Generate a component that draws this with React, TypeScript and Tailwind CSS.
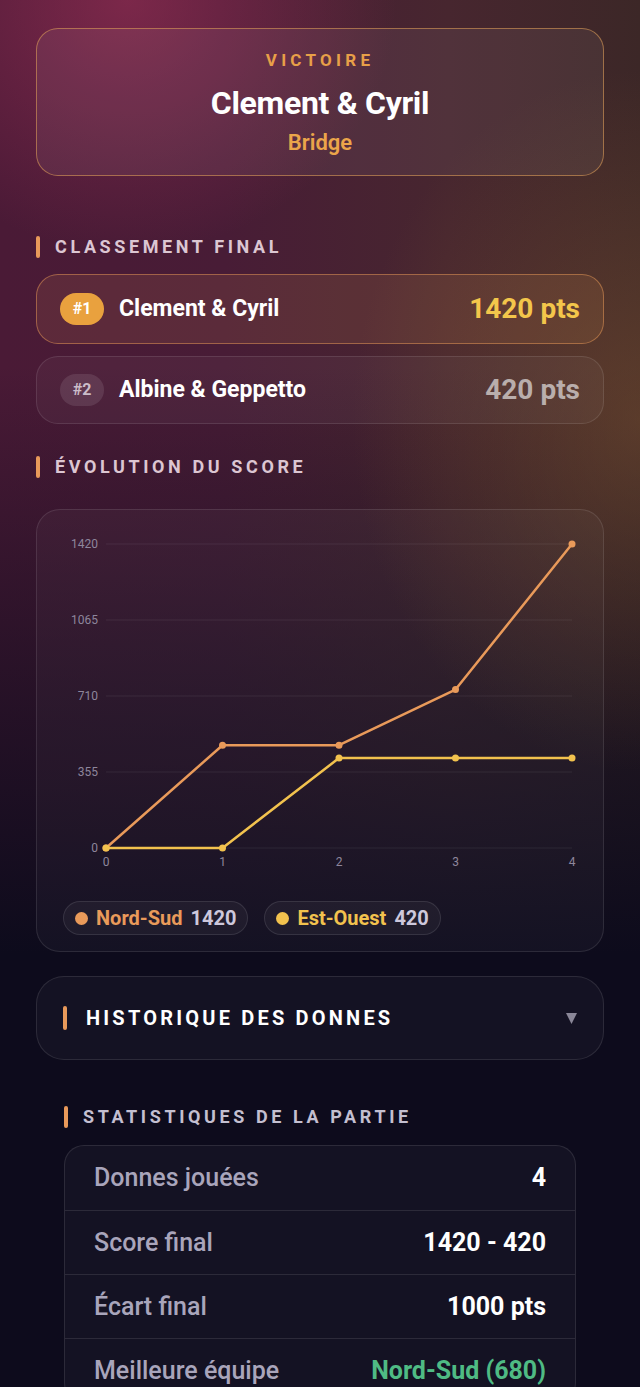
const nordSud = [0, 480, 480, 740, 1420];
const estOuest = [0, 0, 420, 420, 420];
const maxScore = 1420;

const ticks = [1420, 1065, 710, 355, 0];

const stats = [
  { label: "Donnes jouées", value: "4" },
  { label: "Score final", value: "1420 - 420" },
  { label: "Écart final", value: "1000 pts" },
  { label: "Meilleure équipe", value: "Nord-Sud (680)", accent: true },
];

const px = (i: number) => 69 + i * 116.5;
const py = (v: number) => 338 - (v / maxScore) * 304;

const SectionTitle = ({ children, className = "" }: { children: React.ReactNode; className?: string }) => (
  <div className={`flex h-[22px] items-center gap-[15px] ${className}`}>
    <span className="h-[22px] w-[4px] rounded-full bg-[#e8995a]" />
    <h2 className="text-[18px] font-bold uppercase leading-none tracking-[0.2em] text-[#dcc6d2]">{children}</h2>
  </div>
);

const ScoreChart = () => {
  const line = (data: number[]) => data.map((v, i) => `${px(i)},${py(v)}`).join(" ");

  return (
    <svg width="568" height="372" viewBox="0 0 568 372" className="block">
      {ticks.map((t) => (
        <g key={t}>
          <line x1="69" x2="535" y1={py(t)} y2={py(t)} stroke="rgba(255,255,255,0.07)" strokeWidth="1" />
          <text x="61" y={py(t) + 4} textAnchor="end" fontSize="12" fill="#8e869c" fontFamily="Roboto, sans-serif">
            {t}
          </text>
        </g>
      ))}
      {[0, 1, 2, 3, 4].map((i) => (
        <text key={i} x={px(i)} y="356" textAnchor="middle" fontSize="12" fill="#8e869c" fontFamily="Roboto, sans-serif">
          {i}
        </text>
      ))}

      <polyline points={line(nordSud)} fill="none" stroke="#e99a5a" strokeWidth="2.5" strokeLinejoin="round" />
      {nordSud.map((v, i) => (
        <circle key={`ns${i}`} cx={px(i)} cy={py(v)} r="3.5" fill="#e99a5a" />
      ))}

      <polyline points={line(estOuest)} fill="none" stroke="#f2c24e" strokeWidth="2.5" strokeLinejoin="round" />
      {estOuest.map((v, i) => (
        <circle key={`eo${i}`} cx={px(i)} cy={py(v)} r="3.5" fill="#f2c24e" />
      ))}
    </svg>
  );
};

const LegendPill = ({ color, text, label, value }: { color: string; text: string; label: string; value: number }) => (
  <div className="flex h-[34px] items-center gap-[8px] rounded-full border border-white/10 bg-white/[0.04] px-[11px]">
    <span className={`h-[13px] w-[13px] rounded-full ${color}`} />
    <span className={`text-[20px] font-bold ${text}`}>{label}</span>
    <span className="text-[20px] font-bold text-[#cdc8dc]">{value}</span>
  </div>
);

export default function App() {
  return (
    <div className="min-h-[1387px] w-full overflow-hidden bg-[#0d0b1c] bg-[radial-gradient(ellipse_42%_18%_at_20%_0%,rgba(165,50,90,0.55),transparent),radial-gradient(ellipse_45%_25%_at_100%_30%,rgba(125,82,48,0.5),transparent),linear-gradient(180deg,transparent_26%,rgba(13,11,28,0.5)_46%,#0d0b1c_68%),linear-gradient(90deg,#4a1a36_0%,#481c36_35%,#47262f_70%,#3c2727_100%)] font-['Roboto',sans-serif]">
      <div className="px-[36px] pt-[28px]">
        {/* victory banner */}
        <div className="flex h-[148px] flex-col items-center rounded-[22px] border border-[#d99a55]/60 bg-white/[0.06] pt-[23px]">
          <p className="text-[17px] font-bold leading-none tracking-[0.25em] text-[#e8a048]">VICTOIRE</p>
          <h1 className="mt-[18px] text-[32px] font-bold leading-none tracking-[-0.01em] text-white">Clement &amp; Cyril</h1>
          <p className="mt-[13px] text-[22px] font-semibold leading-none text-[#eba54a]">Bridge</p>
        </div>

        <SectionTitle className="mt-[60px]">Classement final</SectionTitle>

        <div className="mt-[16px] flex flex-col gap-[12px]">
          <div className="flex h-[70px] items-center rounded-[22px] border border-[#e89a58]/50 bg-[#e89a58]/[0.12] px-[23px]">
            <span className="flex h-[32px] w-[44px] items-center justify-center rounded-full bg-[#e9a13e] text-[16px] font-bold text-white">#1</span>
            <span className="ml-[15px] text-[23px] font-bold text-white">Clement &amp; Cyril</span>
            <span className="ml-auto text-[28px] font-bold text-[#f3c64b]">1420 pts</span>
          </div>
          <div className="flex h-[68px] items-center rounded-[22px] border border-white/10 bg-white/[0.04] px-[23px]">
            <span className="flex h-[32px] w-[44px] items-center justify-center rounded-full bg-white/10 text-[16px] font-bold text-[#cbbcc8]">#2</span>
            <span className="ml-[15px] text-[23px] font-bold text-white">Albine &amp; Geppetto</span>
            <span className="ml-auto text-[28px] font-bold text-[#b9aeac]">420 pts</span>
          </div>
        </div>

        <SectionTitle className="mt-[32px]">Évolution du score</SectionTitle>

        {/* score chart */}
        <div className="mt-[31px] h-[443px] rounded-[24px] border border-white/10 bg-white/[0.03]">
          <ScoreChart />
          <div className="mt-[19px] flex gap-[16px] px-[26px]">
            <LegendPill color="bg-[#e99a5a]" text="text-[#e99a5a]" label="Nord-Sud" value={1420} />
            <LegendPill color="bg-[#f2c24e]" text="text-[#f2c24e]" label="Est-Ouest" value={420} />
          </div>
        </div>

        {/* history accordion */}
        <button className="mt-[24px] flex h-[84px] w-full items-center rounded-[28px] border border-white/10 bg-white/[0.03] pl-[26px] pr-[26px] text-left">
          <span className="h-[24px] w-[4px] rounded-full bg-[#e8995a]" />
          <span className="ml-[19px] text-[20px] font-bold leading-none tracking-[0.16em] text-white">HISTORIQUE DES DONNES</span>
          <svg className="ml-auto" width="11" height="11" viewBox="0 0 11 11">
            <polygon points="0,0 11,0 5.5,11" fill="#8a8798" />
          </svg>
        </button>

        {/* stats */}
        <div className="px-[28px]">
          <SectionTitle className="mt-[46px] [&_h2]:text-[#c3bfd0]">Statistiques de la partie</SectionTitle>
          <div className="mt-[17px] overflow-hidden rounded-[20px] border border-white/10 bg-white/[0.03]">
            {stats.map((s, i) => (
              <div
                key={s.label}
                className={`flex h-[64px] items-center justify-between px-[29px] ${i > 0 ? "border-t border-white/10" : ""}`}
              >
                <span className="text-[25px] font-medium text-[#a9a5bb]">{s.label}</span>
                <span className={`text-[25px] font-bold ${s.accent ? "text-[#4fbb84]" : "text-white"}`}>{s.value}</span>
              </div>
            ))}
          </div>
        </div>
      </div>
    </div>
  );
}
